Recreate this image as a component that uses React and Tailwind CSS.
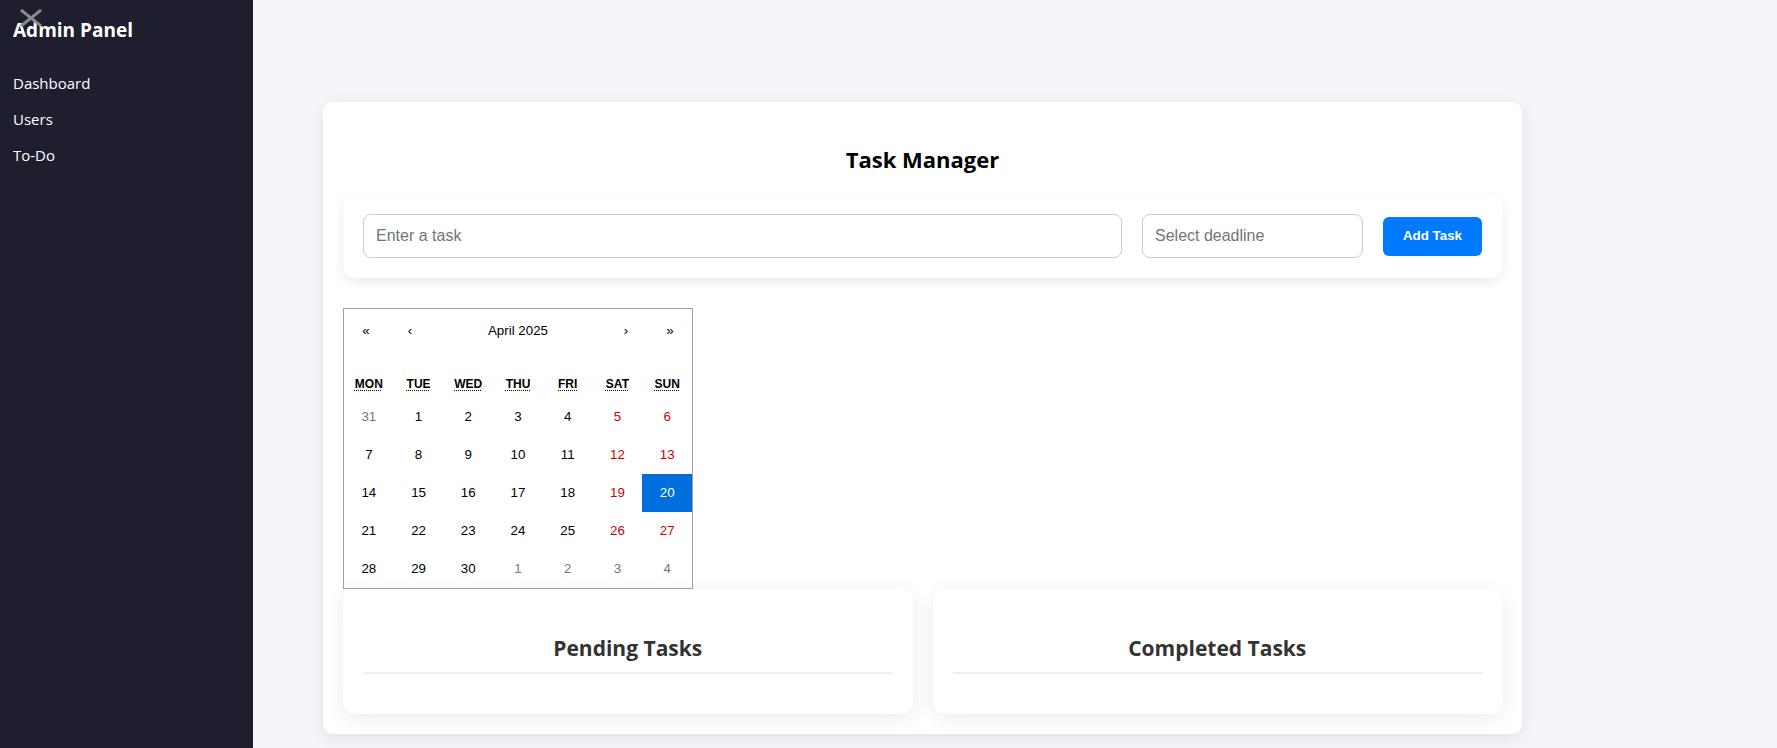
import React from "react";

const weekdays = ["Mon", "Tue", "Wed", "Thu", "Fri", "Sat", "Sun"];

const buildDays = () => {
  const days = [{ n: 31, other: true }];
  for (let i = 1; i <= 30; i++) days.push({ n: i });
  for (let i = 1; i <= 4; i++) days.push({ n: i, other: true });
  return days;
};

const Calendar = () => {
  const days = buildDays();
  return (
    <div className="w-[350px] border border-[#a0a096] bg-white font-['Liberation_Sans',Arial,sans-serif] leading-[1.125em]">
      <div className="flex h-[44px] mb-4 text-[13.33px] text-black">
        <button className="min-w-[44px] flex items-center justify-center">«</button>
        <button className="min-w-[44px] flex items-center justify-center">‹</button>
        <button className="flex-1 flex items-center justify-center">April 2025</button>
        <button className="min-w-[44px] flex items-center justify-center">›</button>
        <button className="min-w-[44px] flex items-center justify-center">»</button>
      </div>
      <div className="grid grid-cols-7 h-[29px] items-center text-[12px] font-bold uppercase text-center">
        {weekdays.map(d => (
          <div key={d}>
            <abbr className="underline decoration-dotted decoration-1 underline-offset-2">{d}</abbr>
          </div>
        ))}
      </div>
      <div className="grid grid-cols-7 text-[13.33px] text-center">
        {days.map((d, i) => {
          const col = i % 7;
          const weekend = col >= 5;
          const active = !d.other && d.n === 20;
          let color = "text-black";
          if (d.other) color = "text-[#757575]";
          else if (weekend) color = "text-[#d10000]";
          if (active) color = "text-white bg-[#006edc]";
          return (
            <div key={i} className={`h-[38px] flex items-center justify-center ${color}`}>
              {d.n}
            </div>
          );
        })}
      </div>
    </div>
  );
};

const TaskColumn = ({ title }) => (
  <div className="bg-white rounded-[12px] shadow-[0_4px_20px_rgba(0,0,0,0.08)] px-5 pt-5 pb-10">
    <h3 className="mt-[23px] pb-[8px] border-b-2 border-[#eee] text-center text-[21px] font-bold text-[#333] leading-[32px]">
      {title}
    </h3>
  </div>
);

export default function App() {
  return (
    <div className="flex h-[748px] bg-[#f4f5f9] font-['Open_Sans','Noto_Sans',sans-serif] overflow-hidden">
      {/* Sidebar */}
      <aside className="relative w-[253px] shrink-0 bg-[#1e1e2f] text-white px-[13px] pt-[16px]">
        <svg className="absolute left-[20px] top-[9px] w-[22px] h-[18px]" viewBox="0 0 22 18">
          <path d="M1 1 L21 17 M21 1 L1 17" stroke="#8a8a8a" strokeWidth="3" strokeLinecap="butt" />
        </svg>
        <h2 className="text-[19px] font-bold leading-[28px]">Admin Panel</h2>
        <nav className="mt-[27px] flex flex-col gap-[12px] text-[15px]">
          <a className="leading-[24px]">Dashboard</a>
          <a className="leading-[24px]">Users</a>
          <a className="leading-[24px]">To-Do</a>
        </nav>
      </aside>

      {/* Main */}
      <main className="flex-1 pl-[70px] pt-[102px]">
        <div className="w-[1199px] bg-white rounded-[10px] shadow-[0_4px_16px_rgba(0,0,0,0.08)] p-5">
          <h2 className="text-center text-[22px] font-bold text-black leading-[32px] mt-[21px] mb-[19px]">
            Task Manager
          </h2>

          <div className="flex items-center gap-5 p-5 bg-white rounded-[12px] shadow-[0_4px_12px_rgba(0,0,0,0.08)]">
            <input
              className="flex-1 h-[44px] px-3 border border-[#ccc] rounded-[8px] text-[16px] font-['Liberation_Sans',Arial,sans-serif] placeholder:text-[#757575] outline-none"
              placeholder="Enter a task"
            />
            <input
              className="w-[221px] h-[44px] px-3 border border-[#ccc] rounded-[8px] text-[16px] font-['Liberation_Sans',Arial,sans-serif] placeholder:text-[#757575] outline-none"
              placeholder="Select deadline"
            />
            <button className="w-[99px] h-[39px] bg-[#007bff] text-white rounded-[6px] text-[13.33px] font-bold font-['Liberation_Sans',Arial,sans-serif]">
              Add Task
            </button>
          </div>

          <div className="mt-[30px]">
            <Calendar />
          </div>

          <div className="grid grid-cols-2 gap-5">
            <TaskColumn title="Pending Tasks" />
            <TaskColumn title="Completed Tasks" />
          </div>
        </div>
      </main>
    </div>
  );
}
